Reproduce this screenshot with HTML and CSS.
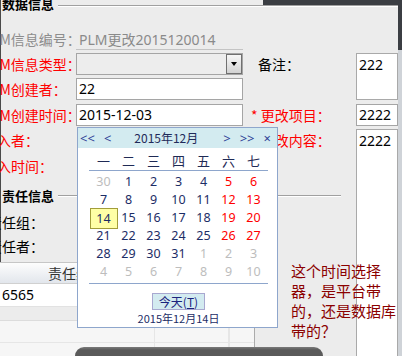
FILE: index.html
```html
<!DOCTYPE html>
<html lang="zh-CN">
<head>
    <meta charset="UTF-8">
    <meta name="viewport" content="width=device-width, initial-scale=1.0">
    <title>PLM更改</title>
    <link rel="stylesheet" href="styles.css">
</head>
<body>
    <div class="screen">
        <div class="main">
            <div class="form">
                <div class="legend legend-top"><span class="legend-text">数据信息</span><span class="legend-line"></span></div>

                <div class="lbl muted c1 r2">PLM信息编号：</div>
                <div class="readonly c2 r2">PLM更改2015120014</div>

                <div class="lbl req c1 r3">PLM信息类型：</div>
                <div class="field select c2 r3"><span class="select-btn"><span class="caret"></span></span></div>
                <div class="lbl c4 r3 memo-lbl">备注：</div>
                <div class="area memo">222</div>

                <div class="lbl req c1 r4">PLM创建者：</div>
                <div class="field c2 r4">22</div>

                <div class="lbl req c1 r5">PLM创建时间：</div>
                <div class="field c2 r5">2015-12-03</div>
                <div class="lbl req c4 r5">* 更改项目：</div>
                <div class="field c5 r5">2222</div>

                <div class="lbl req c1 r6">录入者：</div>
                <div class="lbl req c4 r6">* 更改内容：</div>
                <div class="area content">2222</div>

                <div class="lbl req c1 r7">录入时间：</div>

                <div class="legend legend-duty"><span class="legend-text">责任信息</span><span class="legend-line"></span></div>

                <div class="lbl indent c1 r9">责任组：</div>
                <div class="lbl indent c1 r10">责任者：</div>

                <div class="table">
                    <div class="thead"><span class="th">责任组</span></div>
                    <div class="trow"><span class="td">6565</span></div>
                    <div class="trow alt"></div>
                    <div class="tfill"><span></span><span></span><span></span></div>
                    <div class="tfill"><span></span><span></span><span></span></div>
                </div>
            </div>
        </div>
        <div class="edge"></div>
    </div>

    <div class="calendar">
        <div class="cal-head">
            <span class="nav">&lt;&lt;</span>
            <span class="nav">&lt;</span>
            <span class="cal-title">2015年12月</span>
            <span class="nav push">&gt;</span>
            <span class="nav">&gt;&gt;</span>
            <span class="nav">×</span>
        </div>
        <div class="cal-week">
            <span>一</span><span>二</span><span>三</span><span>四</span><span>五</span><span>六</span><span>七</span>
        </div>
        <div class="cal-days">
            <span class="oth">30</span><span>1</span><span>2</span><span>3</span><span>4</span><span class="we">5</span><span class="we">6</span>
            <span>7</span><span>8</span><span>9</span><span>10</span><span>11</span><span class="we">12</span><span class="we">13</span>
            <span><b class="today">14</b></span><span>15</span><span>16</span><span>17</span><span>18</span><span class="we">19</span><span class="we">20</span>
            <span>21</span><span>22</span><span>23</span><span>24</span><span>25</span><span class="we">26</span><span class="we">27</span>
            <span>28</span><span>29</span><span>30</span><span>31</span><span class="oth">1</span><span class="oth">2</span><span class="oth">3</span>
            <span class="oth">4</span><span class="oth">5</span><span class="oth">6</span><span class="oth">7</span><span class="oth">8</span><span class="oth">9</span><span class="oth">10</span>
        </div>
        <div class="cal-foot">
            <span class="today-btn">今天(<u>T</u>)</span>
            <span class="cal-date">2015年12月14日</span>
        </div>
    </div>

    <div class="note">这个时间选择<br>器，是平台带<br>的，还是数据库<br>带的？</div>
    <div class="dock"></div>
</body>
</html>
```

FILE: styles.css
```css
body {
    margin: 0;
    width: 402px;
    height: 356px;
    overflow: hidden;
    position: relative;
    background: #ececec;
    font-family: "Noto Sans", "Noto Sans CJK SC", sans-serif;
    font-size: 14px;
    color: #000;
}

.screen {
    display: flex;
    height: 356px;
    border-left: 1px solid #4a4a4a;
}

.main {
    flex: 1;
    min-width: 0;
}

.edge {
    width: 4px;
    background: linear-gradient(#3b3e43 0 50px, #cfd3d8 50px);
}

/* form grid */
.form {
    display: grid;
    margin-left: -19px;
    height: 356px;
    grid-template-columns: 94px 167px 7px 106px 42px;
    grid-template-rows: 28px 25px 25px 26px 25px 26px 26px 30px 24px 27px 1fr;
    align-items: start;
}

.c1 { grid-column: 1; }
.c2 { grid-column: 2; }
.c4 { grid-column: 4; }
.c5 { grid-column: 5; }
.r2 { grid-row: 2; }
.r3 { grid-row: 3; }
.r4 { grid-row: 4; }
.r5 { grid-row: 5; }
.r6 { grid-row: 6; }
.r7 { grid-row: 7; }
.r9 { grid-row: 9; }
.r10 { grid-row: 10; }

.legend {
    display: flex;
    align-items: center;
    font-weight: bold;
    font-size: 13px;
}

.legend-text {
    padding: 0 4px 0 20px;
    line-height: 14px;
    font-family: "Noto Sans CJK SC", sans-serif;
}

.legend-line {
    flex: 1;
    border-top: 1px solid #a0a0a0;
    border-bottom: 1px solid #fff;
}

.legend-top {
    grid-column: 1 / -1;
    grid-row: 1;
    align-items: flex-start;
    height: 14px;
    background: linear-gradient(#3b3e43, #3b3e43) no-repeat right top / 135px 5px;
}

.legend-top .legend-text {
    margin-top: -3px;
}

.legend-top .legend-line {
    margin-top: 5px;
}

.legend-duty {
    grid-column: 1 / 5;
    grid-row: 8;
    align-self: center;
    margin-right: 15px;
}

.lbl {
    height: 22px;
    line-height: 22px;
    padding-left: 1px;
    white-space: nowrap;
    font-family: "Noto Sans CJK SC", sans-serif;
}

.req { color: #f00; }
.muted { color: #8d8d8d; }
.indent { padding-left: 6px; }
.memo-lbl { padding-left: 8px; }

.readonly {
    height: 22px;
    box-sizing: border-box;
    padding: 2px 3px 0;
    line-height: 19px;
    color: #8a8a8a;
    border-bottom: 1px solid #c4c4c4;
    white-space: nowrap;
}

.field {
    height: 22px;
    box-sizing: border-box;
    border: 1px solid #a5a5a5;
    background: #fff;
    padding: 0 2px;
    line-height: 20px;
    white-space: nowrap;
    overflow: hidden;
}

.select {
    display: flex;
    padding: 0;
    background: #ededed;
}

.select-btn {
    width: 16px;
    height: 20px;
    margin-left: auto;
    box-sizing: border-box;
    border: 1px solid #707070;
    background: linear-gradient(#f7f7f7, #d2d2d2);
    display: flex;
    align-items: center;
    justify-content: center;
}

.caret {
    width: 0;
    height: 0;
    border-left: 3px solid transparent;
    border-right: 3px solid transparent;
    border-top: 4px solid #000;
}

.area {
    box-sizing: border-box;
    border: 1px solid #a9a9a9;
    background: #fff;
    padding: 2px;
    line-height: 18px;
    overflow: hidden;
}

.memo {
    grid-column: 5;
    grid-row: 3 / 5;
    height: 47px;
}

.content {
    grid-column: 5;
    grid-row: 6 / 12;
    align-self: stretch;
}

/* data grid */
.table {
    grid-column: 1 / 4;
    grid-row: 11;
    align-self: stretch;
    margin-right: -5px;
    border-right: 1px solid #ababab;
    background: #f6f6f6;
    display: flex;
    flex-direction: column;
}

.thead {
    height: 22px;
    box-sizing: border-box;
    border-top: 1px solid #c6c6c6;
    border-bottom: 1px solid #d0d0d0;
    background: linear-gradient(#fdfdfd, #e2e6ec);
    line-height: 20px;
}

.th {
    padding-left: 66px;
    color: #333;
    font-family: "Noto Sans CJK SC", sans-serif;
}

.trow {
    height: 23px;
    box-sizing: border-box;
    background: #fff;
    border-bottom: 1px solid #e2e2e2;
    line-height: 22px;
}

.trow.alt {
    height: 14px;
    background: #ececec;
    border-bottom-color: #dcdcdc;
}

.td {
    padding-left: 20px;
}

.tfill {
    display: flex;
    height: 21px;
    border-bottom: 1px solid #e6e6e6;
}

.tfill span {
    border-right: 1px solid #e6e6e6;
}

.tfill span:nth-child(1) { width: 172px; }
.tfill span:nth-child(2) { width: 73px; }

/* date picker popup */
.calendar {
    position: absolute;
    left: 77px;
    top: 127px;
    width: 201px;
    height: 201px;
    box-sizing: border-box;
    border: 1px solid #8ea6cc;
    background: #fff;
    color: #1c2d66;
    z-index: 2;
}

.cal-head {
    height: 20px;
    background: #d3ebf0;
    display: flex;
    align-items: center;
    padding: 0 6px 0 2px;
    font-size: 13px;
    line-height: 20px;
    color: #2e3f96;
}

.nav + .nav {
    margin-left: 9px;
}

.cal-title {
    margin-left: 23px;
    font-size: 12px;
    color: #1f2a5a;
    font-family: "Noto Sans CJK SC", sans-serif;
}

.nav.push {
    margin-left: auto;
}

.cal-week {
    margin: 4px 0 0 11px;
    width: 179px;
    height: 19px;
    box-sizing: border-box;
    padding: 0 2px;
    border-bottom: 1px solid #8ea6cc;
    display: grid;
    grid-template-columns: repeat(7, 25px);
    line-height: 18px;
    font-size: 13px;
    text-align: center;
    color: #1f2a55;
    font-family: "Noto Sans CJK SC", sans-serif;
}

.cal-days {
    margin: 2px 0 0 13px;
    width: 175px;
    display: grid;
    grid-template-columns: repeat(7, 25px);
    grid-auto-rows: 18px;
    font-size: 12.5px;
    line-height: 18px;
}

.cal-days span {
    display: flex;
    align-items: center;
    justify-content: center;
}

.cal-days .we { color: #f00; }
.cal-days .oth { color: #bdbdbd; }

.today {
    flex: none;
    width: 28px;
    height: 21px;
    box-sizing: border-box;
    border: 1px solid #a29d3a;
    background: #ffffa6;
    font-weight: normal;
    line-height: 19px;
    text-align: center;
}

.cal-foot {
    margin: 2px 0 0 11px;
    width: 179px;
    border-top: 1px solid #8ea6cc;
    padding-top: 9px;
    display: flex;
    flex-direction: column;
    align-items: center;
}

.today-btn {
    width: 53px;
    height: 17px;
    box-sizing: border-box;
    border: 1px solid #a8a8d0;
    background: #d3ebf0;
    font-size: 12px;
    line-height: 15px;
    text-align: center;
    color: #1a237e;
    font-family: "Noto Sans CJK SC", sans-serif;
}

.cal-date {
    font-size: 11px;
    line-height: 17px;
    color: #1c2d66;
    font-family: "Noto Sans CJK SC", sans-serif;
}

/* overlays */
.note {
    position: absolute;
    left: 291px;
    top: 261px;
    font-size: 15px;
    line-height: 20px;
    color: #8b0000;
    white-space: nowrap;
    z-index: 3;
    font-family: "Noto Sans CJK SC", sans-serif;
}

.dock {
    position: absolute;
    left: 75px;
    top: 347px;
    width: 248px;
    height: 14px;
    border-radius: 9px 9px 0 0;
    background: linear-gradient(#7a7a7a, #5a5a5a 3px);
    z-index: 3;
}
```
